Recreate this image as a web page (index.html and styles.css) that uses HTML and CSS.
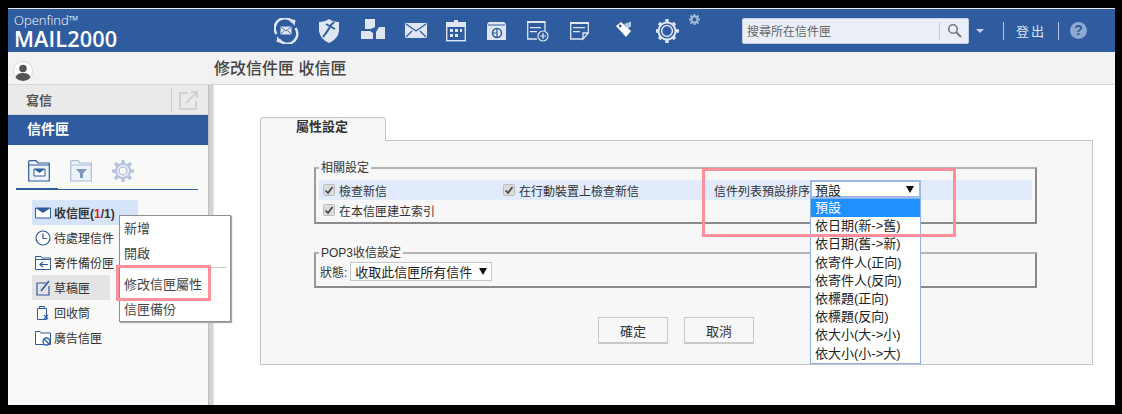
FILE: index.html
```html
<!DOCTYPE html>
<html lang="zh-Hant">
<head>
<meta charset="utf-8">
<title>MAIL2000</title>
<link rel="stylesheet" href="styles.css">
</head>
<body>
<div class="frame">
  <header class="topbar">
    <div class="logo"><div class="logo-top">Openfind™</div><div class="logo-main">MAIL2000</div></div>
    <nav class="tools">
      <svg class="t44" width="44" height="26" viewBox="0 0 44 26"><path d="M2.500 16A10 10 0 0 1 19 4.500" fill="none" stroke="#dfe6f2" stroke-width="2.400"/><path d="M21.500 10A10 10 0 0 1 5 21.500" fill="none" stroke="#dfe6f2" stroke-width="2.400"/><path d="M16 1l5.500 1-1 6zM8 25l-5.500-1 1-6z" fill="#dfe6f2"/><rect x="6.500" y="8.500" width="11" height="8" fill="#dfe6f2"/><path d="M7 9l5 4 5-4M7 16l3.500-3.500M17 16l-3.500-3.500" fill="none" stroke="#2f5b9f" stroke-width=".8"/></svg>
      <svg width="43" height="26" viewBox="0 0 43 26"><path d="M1 4Q7 4 11 1Q15 4 21 4V13Q20 21 11 25Q2 21 1 13Z" fill="#dfe6f2"/><path d="M5 19Q9 14 12 9" fill="none" stroke="#2f5b9f" stroke-width="2"/><path d="M8 6l9 5" fill="none" stroke="#2f5b9f" stroke-width="1.800"/><path d="M12 8l4-4" fill="none" stroke="#2f5b9f" stroke-width="1.800"/></svg>
      <svg width="44" height="26" viewBox="0 0 44 26"><path d="M4 1H14V9L10 11H4ZM0 13H9L12 15V21H0ZM24 9V21H15V14L18 9Z" fill="#dfe6f2"/></svg>
      <svg width="41" height="26" viewBox="0 0 41 26"><rect y="5" width="22" height="15" rx="1" fill="#dfe6f2"/><path d="M1 6l10 7 10-7M1 19l6-6M21 19l-6-6" fill="none" stroke="#2f5b9f" stroke-width="1.300"/></svg>
      <svg width="40" height="26" viewBox="0 0 40 26"><rect x=".7" y="5.700" width="18.600" height="17" fill="none" stroke="#dfe6f2" stroke-width="1.400"/><rect y="4" width="20" height="5" fill="#dfe6f2"/><rect x="8" y="2" width="4" height="3" fill="#dfe6f2"/><path d="M4 11h3v3H4zM9 11h3v3H9zM14 11h2v3h-2zM4 16h3v3H4zM9 16h3v3H9z" fill="#dfe6f2"/></svg>
      <svg width="41" height="26" viewBox="0 0 41 26"><path d="M1 8Q1 4 4 4H17Q20 4 20 8V22H1Z" fill="#dfe6f2"/><path d="M2 7H19" stroke="#2f5b9f"/><circle cx="11" cy="15" r="4.500" fill="none" stroke="#2f5b9f" stroke-width="1.500"/><path d="M11 10v10M11 15H7" stroke="#2f5b9f" stroke-width="1.200"/></svg>
      <svg width="43" height="26" viewBox="0 0 43 26"><path d="M10 21H.7V3.700H18V13" fill="none" stroke="#dfe6f2" stroke-width="1.300"/><path d="M0 3h18v2H0zM3 9h11v1.300H3zM3 13h7v1.300H3z" fill="#dfe6f2"/><circle cx="16" cy="18" r="5" fill="#2f5b9f" stroke="#dfe6f2" stroke-width="1.200"/><path d="M16 15v6M13 18h6" stroke="#dfe6f2" stroke-width="1.200"/></svg>
      <svg width="46" height="26" viewBox="0 0 46 26"><path d="M13 21H.7V4.700H18.300V15L13 21V15H18" fill="none" stroke="#dfe6f2" stroke-width="1.300"/><path d="M0 4h19v2H0zM3 9h12v1.300H3zM3 13h7v1.300H3z" fill="#dfe6f2"/></svg>
      <svg width="40" height="26" viewBox="0 0 40 26"><path d="M8 6L15 3.500V8.500L12 10.500Z" fill="#b9c8e2"/><path d="M0 8L5 4L15 13L10 19Z" fill="#fff"/><circle cx="4.200" cy="8" r="1.400" fill="#2f5b9f"/></svg>
      <svg class="gear" width="33" height="26" viewBox="0 0 33 26"><path d="M11 1v4M11 21v4M-1 13h4M19 13h4M3 5l2.500 2.500M16.500 18.500L19 21M19 5l-2.500 2.500M5.500 18.500L3 21" stroke="#dfe6f2" stroke-width="3.400"/><circle cx="11" cy="13" r="8.500" fill="#2f5b9f" stroke="#dfe6f2" stroke-width="2"/><circle cx="11" cy="13" r="5.400" fill="none" stroke="#dfe6f2" stroke-width="1.500"/></svg>
      <svg class="gear-small" width="11" height="11" viewBox="0 0 22 22"><path d="M11 0v5M11 17v5M0 11h5M17 11h5M3 3l3 3M16 16l3 3M19 3l-3 3M6 16l-3 3" stroke="#a5b8d8" stroke-width="4"/><circle cx="11" cy="11" r="6" fill="none" stroke="#a5b8d8" stroke-width="4"/></svg>
    </nav>
    <div class="search">
      <span class="search-text">搜尋所在信件匣</span>
      <span class="search-btn"><svg width="15" height="15" viewBox="0 0 15 15"><circle cx="6" cy="6" r="4.300" fill="none" stroke="#777" stroke-width="1.600"/><path d="M9 9l5 5" stroke="#777" stroke-width="2"/></svg></span>
    </div>
    <span class="caret"></span>
    <span class="vline first"></span>
    <span class="logout">登出</span>
    <span class="vline"></span>
    <span class="help">?</span>
  </header>

  <div class="subbar">
    <span class="avatar"><svg width="20" height="20" viewBox="0 0 20 20"><circle cx="10" cy="10" r="9.500" fill="#fff" stroke="#d8d8d8"/><circle cx="10" cy="7.500" r="3.800" fill="#555"/><path d="M2.700 17Q3 12 10 12T17.300 17Q14 20 10 20T2.700 17Z" fill="#555"/></svg></span>
    <h1 class="page-title">修改信件匣 收信匣</h1>
  </div>

  <div class="body-row">
    <aside class="sidebar">
      <div class="compose">
        <span>寫信</span>
        <span class="compose-icon"><svg width="20" height="20" viewBox="0 0 20 20"><path d="M9 3H1V19H17V11" fill="none" stroke="#c9c9c9" stroke-width="1.500"/><path d="M7 13L17 3M12 2h6v6" fill="none" stroke="#c9c9c9" stroke-width="1.500"/></svg></span>
      </div>
      <div class="mailbox-head">信件匣</div>
      <div class="side-tabs">
        <svg width="22" height="22" viewBox="0 0 22 22"><path d="M.7 4V1.700Q.7.700 2 .700H8L10 3H21.300V21H.7Z" fill="#eef2f9" stroke="#2f5b9f" stroke-width="1.200"/><path d="M.7 5H21.300" stroke="#2f5b9f"/><path d="M6 9H17V16H6Z" fill="#fff" stroke="#2f5b9f"/><path d="M6 9H17L11.500 13Z" fill="#2f5b9f"/></svg>
        <svg width="22" height="22" viewBox="0 0 22 22"><path d="M.7 4V1.700Q.7.700 2 .700H8L10 3H21.300V21H.7Z" fill="#eef2f9" stroke="#a9bcd9" stroke-width="1.200"/><path d="M.7 5H21.300" stroke="#a9bcd9"/><path d="M6 9H17L13 13.500V18H10V13.500Z" fill="#7f98c0"/></svg>
        <svg width="22" height="22" viewBox="0 0 22 22"><path d="M11 0v4M11 18v4M0 11h4M18 11h4M3 3l3 3M16 16l3 3M19 3l-3 3M6 16l-3 3" stroke="#b4c4de" stroke-width="3.400"/><circle cx="11" cy="11" r="7" fill="#f9f9f7" stroke="#b4c4de" stroke-width="2"/><circle cx="11" cy="11" r="4" fill="none" stroke="#b4c4de" stroke-width="1.500"/></svg>
      </div>
      <ul class="folders">
        <li class="folder inbox"><svg width="16" height="16" viewBox="0 0 16 16"><path d="M.5 3H15.500V13H.5Z" fill="#fff" stroke="#2f5b9f"/><path d="M.5 3H15.500L8 8Z" fill="#2f5b9f"/></svg><b>收信匣<span class="count">(<i>1</i>/1)</span></b></li>
        <li class="folder"><svg width="16" height="16" viewBox="0 0 16 16"><circle cx="8" cy="8" r="7" fill="#fff" stroke="#2f5b9f" stroke-width="1.200"/><path d="M8 3.500V8.500H12" fill="none" stroke="#2f5b9f" stroke-width="1.200"/></svg>待處理信件</li>
        <li class="folder"><svg width="16" height="16" viewBox="0 0 16 16"><path d="M.5 3V1.500H6L7 3H15.500V14.500H.5Z" fill="#fff" stroke="#2f5b9f"/><path d="M.5 4.500H15.500" stroke="#2f5b9f"/><path d="M13 9.500H5M8 7L5 9.500L8 12" fill="none" stroke="#2f5b9f" stroke-width="1.200"/></svg>寄件備份匣</li>
        <li class="folder draft"><svg width="16" height="16" viewBox="0 0 16 16"><path d="M11 3H2V15H14V6" fill="none" stroke="#2f5b9f" stroke-width="1.200"/><path d="M6 11L14 1" stroke="#2f5b9f" stroke-width="1.600"/></svg>草稿匣</li>
        <li class="folder"><svg width="16" height="16" viewBox="0 0 16 16"><path d="M2.500 3.500H11.500V14.500H2.500Z" fill="#fff" stroke="#2f5b9f"/><path d="M4.500 3V1.500H9.500V3" fill="none" stroke="#2f5b9f"/><path d="M9 10l4 4M13 10l-4 4" stroke="#2f5b9f" stroke-width="1.100"/></svg>回收筒</li>
        <li class="folder"><svg width="16" height="16" viewBox="0 0 16 16"><path d="M.5 3V1.500H5L6 3H15.500V14.500H.5Z" fill="#fff" stroke="#2f5b9f"/><circle cx="11.500" cy="11.500" r="3.500" fill="#fff" stroke="#2f5b9f" stroke-width="1.300"/><path d="M9 9l5 5" stroke="#2f5b9f" stroke-width="1.300"/></svg>廣告信匣</li>
      </ul>
    </aside>
    <div class="splitter"></div>
    <main class="content">
      <div class="tab"><span>屬性設定</span></div>
      <div class="panel">
        <fieldset class="group related">
          <legend>相關設定</legend>
          <div class="opt-row tinted">
            <label class="check col1"><svg class="cb" width="12" height="12" viewBox="0 0 12 12"><rect x=".5" y=".5" width="11" height="11" rx="1" fill="#dcdcdc" stroke="#bcbcbc"/><path d="M2.500 6.500L5 9L9.500 3" fill="none" stroke="#444" stroke-width="1.700"/></svg>檢查新信</label>
            <label class="check col2"><svg class="cb" width="12" height="12" viewBox="0 0 12 12"><rect x=".5" y=".5" width="11" height="11" rx="1" fill="#dcdcdc" stroke="#bcbcbc"/><path d="M2.500 6.500L5 9L9.500 3" fill="none" stroke="#444" stroke-width="1.700"/></svg>在行動裝置上檢查新信</label>
            <span class="sort-label">信件列表預設排序</span>
          </div>
          <div class="opt-row">
            <label class="check col1"><svg class="cb" width="12" height="12" viewBox="0 0 12 12"><rect x=".5" y=".5" width="11" height="11" rx="1" fill="#dcdcdc" stroke="#bcbcbc"/><path d="M2.500 6.500L5 9L9.500 3" fill="none" stroke="#444" stroke-width="1.700"/></svg>在本信匣建立索引</label>
          </div>
        </fieldset>
        <fieldset class="group pop3">
          <legend>POP3收信設定</legend>
          <div class="status-row"><span>狀態:</span><span class="select-box wide">收取此信匣所有信件<i class="arrow"></i></span></div>
        </fieldset>
        <div class="actions"><button class="btn" type="button">確定</button><button class="btn" type="button">取消</button></div>
      </div>
    </main>
  </div>

  <div class="sort-select">
    <div class="select-box sort-current">預設<i class="arrow"></i></div>
    <ul class="options">
      <li class="selected">預設</li>
      <li>依日期(新-&gt;舊)</li>
      <li>依日期(舊-&gt;新)</li>
      <li>依寄件人(正向)</li>
      <li>依寄件人(反向)</li>
      <li>依標題(正向)</li>
      <li>依標題(反向)</li>
      <li>依大小(大-&gt;小)</li>
      <li>依大小(小-&gt;大)</li>
    </ul>
  </div>

  <ul class="context-menu">
    <li>新增</li>
    <li>開啟</li>
    <li class="sep"></li>
    <li>修改信匣屬性</li>
    <li>信匣備份</li>
  </ul>
  <div class="mark mark-menu"></div>
  <div class="mark mark-sort"></div>
</div>
</body>
</html>
```

FILE: styles.css
```css
* { box-sizing: border-box; }
html, body { margin: 0; padding: 0; background: #000; }
body { width: 1122px; height: 414px; overflow: hidden; padding: 8px 7px 9px 8px; font-family: "Liberation Sans", "Noto Sans CJK TC", sans-serif; font-size: 12px; color: #333; }
ul { list-style: none; margin: 0; padding: 0; }
.frame { position: relative; width: 1107px; height: 397px; display: flex; flex-direction: column; background: #fff; overflow: hidden; }

.topbar { height: 44px; border-top: 1px solid #e8e8e8; background: #2f5b9f; display: flex; align-items: center; flex: none; color: #dfe6f2; }
.logo { width: 266px; padding-left: 6px; color: #fff; font-family: "Open Sans", sans-serif; }
.logo-top { font-size: 13px; line-height: 15px; font-weight: 300; }
.logo-main { font-size: 21.700px; line-height: 21px; font-weight: 600; letter-spacing: .1px; }
.tools { display: flex; align-items: center; width: 468px; }
.tools svg { flex: none; }
.gear-small { align-self: flex-start; margin-top: -4px; }
.search { width: 227px; height: 26px; border-radius: 2px; background: #e9eef7; border: 1px solid #c7d2e6; display: flex; align-items: center; justify-content: space-between; padding-left: 4px; }
.search-text { color: #666; font-size: 12px; }
.search-btn { width: 29px; height: 18px; border-left: 1px solid #c4c9d2; display: flex; align-items: center; justify-content: center; }
.caret { width: 0; height: 0; border: 4px solid transparent; border-top: 4px solid #c5d2e8; border-bottom: 0; margin-left: 7px; }
.vline { width: 1px; height: 18px; background: #b9c8e2; margin-left: 12px; }
.vline.first { margin-left: 19px; }
.logout { font-size: 13px; letter-spacing: 2px; margin-left: 12px; width: 30px; color: #dfe6f2; }
.help { width: 17px; height: 17px; margin-left: 11px; border-radius: 50%; background: #8ea8d4; color: #2f5b9f; font: bold 14px/17px "Liberation Sans", sans-serif; text-align: center; }

.subbar { height: 33px; flex: none; background: #f2f2f2; display: flex; align-items: center; border-bottom: 1px solid #d5d5d5; }
.avatar { width: 206px; padding-left: 5px; height: 20px; margin-top: 5px; }
.page-title { margin: 0; font-size: 16px; font-weight: 500; color: #444; line-height: 20px; padding-top: 2px; }

.body-row { flex: 1; display: flex; min-height: 0; }
.sidebar { width: 200px; background: #f9f9f7; flex: none; }
.compose { height: 30px; background: #eaeaea; display: flex; align-items: center; justify-content: space-between; padding-left: 18px; font-size: 13px; font-weight: 700; color: #555; border-bottom: 1px solid #d6d6d6; }
.compose-icon { width: 37px; height: 24px; border-left: 1px solid #ccc; display: flex; align-items: center; justify-content: flex-end; padding-right: 9px; }
.mailbox-head { height: 30px; background: #2f5b9f; color: #fff; font-size: 14px; font-weight: 700; line-height: 28px; padding-left: 19px; }
.side-tabs { margin: 0 10px 0 8px; padding: 15px 0 7px 12px; height: 45px; display: flex; gap: 20px; border-bottom: 1px solid #2f5b9f; position: relative; }
.side-tabs::after { content: ""; position: absolute; left: 0; bottom: -1px; width: 42px; height: 2px; background: #2f5b9f; }
.folders { margin: 10px 0 0 24px; }
.folder { height: 25px; display: flex; align-items: center; gap: 3px; padding-left: 3px; width: 106px; color: #333; white-space: nowrap; }
.folder b { font-weight: 700; color: #333; }
.count i { color: #e02020; font-style: normal; }
.inbox { background: #d6e4fa; }
.draft { background: #e4e4e4; width: 78px; }
.splitter { width: 6px; flex: none; background: #d4d4d4; border-left: 1px solid #bfbfbf; border-right: 1px solid #e4e4e4; }
.content { flex: 1; padding: 32px 0 0 46px; background: #fff; }

.tab { width: 126px; height: 24px; background: #f7f7f7; border: 1px solid #c4c4c4; border-bottom: 0; border-radius: 4px 4px 0 0; position: relative; z-index: 1; margin-bottom: -1px; padding-right: 2px; text-align: center; font-size: 13px; font-weight: 700; color: #333; line-height: 17px; }
.panel { width: 833px; height: 225px; background: #f7f7f7; border: 1px solid #c4c4c4; padding: 19px 0 0 53px; }
.group { width: 723px; margin: 0; border: 2px solid; border-color: #b5b5b5 #8a8a8a #8a8a8a #9a9a9a; padding: 0 3px; min-width: 0; }
.group legend { font-size: 12px; line-height: 16px; padding: 0 2px; margin-left: 0; color: #333; }
.related { height: 64px; }
.opt-row { height: 20px; display: flex; align-items: center; padding-left: 4px; }
.tinted { background: #e1ebfb; margin-top: 4px; }
.check { display: flex; align-items: center; gap: 4px; white-space: nowrap; }
.col1 { width: 180px; }
.col2 { width: 211px; }
.cb { flex: none; }
.pop3 { height: 43px; margin-top: 21px; }
.status-row { display: flex; align-items: center; gap: 3px; padding-left: 1px; margin-top: 1px; }
.select-box { display: flex; align-items: center; justify-content: space-between; background: #fff; border: 1px solid #c6c6c6; height: 19px; padding: 0 4px; color: #222; font-size: 13px; }
.wide { width: 142px; }
.arrow { width: 0; height: 0; border-left: 4px solid transparent; border-right: 4px solid transparent; border-top: 7px solid #111; }
.actions { display: flex; gap: 16px; margin: 29px 0 0 284px; }
.btn { width: 70px; height: 27px; background: #f7f7f7; border: 1px solid #c9c9c9; border-bottom-width: 2px; font: inherit; font-size: 13px; color: #333; padding: 0; }

.sort-select { position: absolute; left: 802px; top: 172px; width: 111px; }
.sort-current { border: 2px solid #9dbbe8; height: 18px; padding: 0 5px 0 3px; }
.options { background: #fff; border: 1px solid #8fb0e2; height: 166px; font-size: 13px; color: #222; }
.options li { height: 18.200px; line-height: 18px; padding-left: 4px; white-space: nowrap; }
.options .selected { background: #1e90ff; color: #fff; }

.context-menu { position: absolute; left: 111px; top: 207px; width: 112px; height: 107px; background: #fff; border: 1px solid #8f8f8f; box-shadow: 1px 1px 1px #aaa; font-size: 13px; color: #444; }
.context-menu li { height: 25px; line-height: 25px; padding-left: 4px; }
.context-menu .sep { height: 0; border-top: 1px solid #c8cfbf; margin: 1px 4px 4px 5px; padding: 0; }
.mark { position: absolute; border: 3px solid #ff8f9a; pointer-events: none; }
.mark-menu { left: 108px; top: 257px; width: 95px; height: 36px; }
.mark-sort { left: 694px; top: 160px; width: 254px; height: 69px; }
```
